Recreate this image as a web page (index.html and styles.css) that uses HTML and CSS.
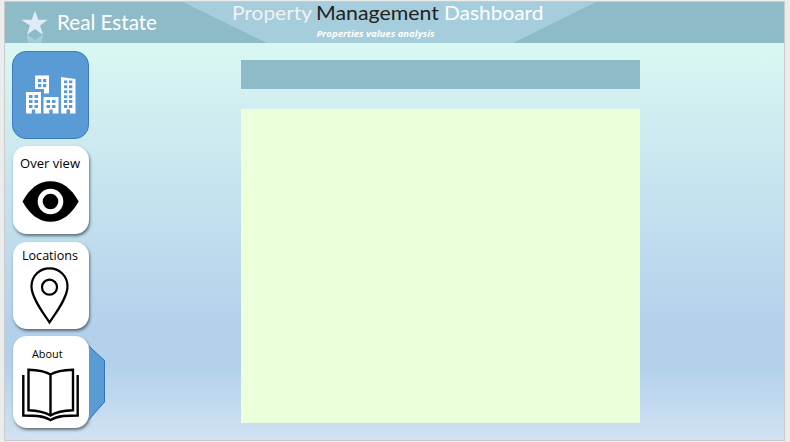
FILE: index.html
```
<!DOCTYPE html>
<html lang="en">
<head>
<meta charset="utf-8">
<title>Property Management Dashboard</title>
<link rel="stylesheet" href="styles.css">
</head>
<body>
<div class="slide">
  <header class="header">
    <svg class="header-art" width="779" height="41" viewBox="5 2 779 41">
      <defs>
        <linearGradient id="fade" x1="0" y1="0" x2="0" y2="1">
          <stop offset="0" stop-color="#dfebf7" stop-opacity=".5"/>
          <stop offset="1" stop-color="#dfebf7" stop-opacity=".25"/>
        </linearGradient>
      </defs>
      <path d="M183 2H596L513 43H267Z" fill="#a5cddb"/>
      <path d="M35 10.500L38.200 19.700H47.800L40.100 25.400L43 34.800L35 29.100L27 34.800L29.900 25.400L21.200 19.700H31.800Z" fill="#dfebf7"/>
      <path d="M27 35L35 40L43 35L41 43H28Z" fill="url(#fade)"/>
      <g class="title">
        <text class="brand" x="57" y="30" textLength="100" lengthAdjust="spacingAndGlyphs">Real Estate</text>
        <text class="soft" x="232" y="19.800" textLength="80" lengthAdjust="spacingAndGlyphs">Property</text>
        <text class="dark" x="316" y="19.800" textLength="123" lengthAdjust="spacingAndGlyphs">Management</text>
        <text x="444" y="19.800" textLength="99.500" lengthAdjust="spacingAndGlyphs">Dashboard</text>
      </g>
      <text class="subtitle" x="316.500" y="37" textLength="118" lengthAdjust="spacingAndGlyphs">Properties values analysis</text>
    </svg>
  </header>
  <div class="body">
    <nav class="nav">
      <div class="card home">
        <svg width="77" height="88" viewBox="12 51 77 88">
          <g fill="#fff">
            <path d="M35 75.500H49V93.500H44V89H35Z"/>
            <path d="M26 92H41V113.500H35.200V109.500H31.800V113.500H26Z"/>
            <path d="M43.500 97H58.500V113.500H52.700V109.500H49.300V113.500H43.500Z"/>
            <path d="M61 77L75.500 79V113.500H70V109.500H66.500V113.500H61Z"/>
          </g>
          <g fill="#5b9bd5">
            <path d="M38 79h3.300v3.300H38zM43 79h3.300v3.300H43zM38 84h3.300v3.300H38zM43 84h3.300v3.300H43z"/>
            <path d="M29 95h3.500v3H29zM34.500 95H38v3h-3.500zM29 100h3.500v3H29zM34.500 100H38v3h-3.500zM29 105h3.500v3H29zM34.500 105H38v3h-3.500z"/>
            <path d="M46.500 100H50v3h-3.500zM52 100h3.500v3H52zM46.500 105H50v3h-3.500zM52 105h3.500v3H52z"/>
            <path d="M64 80.500h3.300v2.800H64zM69 80.500h3.300v2.800H69zM64 85.300h3.300v3H64zM69 85.300h3.300v3H69zM64 90.300h3.300v3H64zM69 90.300h3.300v3H69zM64 95.200h3.300v3H64zM69 95.200h3.300v3H69zM64 100h3.300v3H64zM69 100h3.300v3H69zM64 105h3.300v3H64zM69 105h3.300v3H69z"/>
          </g>
        </svg>
      </div>
      <div class="card overview">
        <svg width="76" height="88" viewBox="13 146 76 88">
          <text x="20" y="168" textLength="60" lengthAdjust="spacingAndGlyphs">Over view</text>
          <path d="M22.500 201.500C30 188 39 181.300 50.500 181.300S71 188 78.700 201.500C71 215 62 221.700 50.500 221.700S30 215 22.500 201.500Z"/>
          <circle cx="50.500" cy="201.500" r="10.300" fill="none" stroke="#fff" stroke-width="5"/>
        </svg>
      </div>
      <div class="card locations">
        <svg width="76" height="87" viewBox="13 242 76 87">
          <text x="22" y="260" textLength="56" lengthAdjust="spacingAndGlyphs">Locations</text>
          <g fill="none" stroke="#000" stroke-width="2.200">
            <path d="M49.500 322.500C44 314 31.500 298 31.500 286.500C31.500 276 39.500 268.300 49.500 268.300S67.500 276 67.500 286.500C67.500 298 55 314 49.500 322.500Z"/>
            <circle cx="49.500" cy="287.200" r="7.500"/>
          </g>
        </svg>
      </div>
      <div class="about-row">
        <div class="card about">
          <svg width="76" height="91" viewBox="13 336 76 91">
            <text class="small" x="32" y="358" textLength="30.500" lengthAdjust="spacingAndGlyphs">About</text>
            <g fill="none" stroke="#000" stroke-width="2.400">
              <path d="M50.500 374.500C44 370.500 37 370 28.500 369.800V410.200C37 410.500 44 411.500 50.500 415.500C57 411.500 64 410.500 73 410.200V369.800C64 370 57 370.500 50.500 374.500ZM50.500 374.500V415"/>
              <path d="M23.300 375V415.500C33 415.500 43 415.500 50.500 420C58 415.500 68 415.500 77.700 415.500V375"/>
            </g>
          </svg>
        </div>
        <svg class="tab" width="17" height="85" viewBox="89 343 17 85">
          <path d="M81 339L104.500 360.500V402L82 427.500Z" fill="#5b9bd5" stroke="#2e75b6"/>
        </svg>
      </div>
    </nav>
    <main class="content">
      <div class="bar"></div>
      <div class="panel"></div>
    </main>
  </div>
</div>
</body>
</html>
```
FILE: styles.css
```
body {
  margin: 0;
  background: #ececec;
  overflow: hidden;
}

svg {
  display: block;
}

.slide {
  box-sizing: border-box;
  width: 781px;
  height: 440px;
  margin: 1px 0 0 4px;
  border: 1px solid #cbcbcb;
  background: linear-gradient(#dcfbf4 0%, #d9f7f2 10%, #b3d1eb 74%, #b3d1eb 83%, #d1e2f3 100%);
}

.header {
  height: 41px;
  background: #8ebbc8;
}

.header-art {
  overflow: visible;
}

.title {
  font: 20px Lato, "Open Sans", sans-serif;
  fill: #fff;
}

.title .brand {
  font-size: 21px;
}

.title .soft {
  fill: #f2f2f2;
}

.title .dark {
  fill: #222;
}

.subtitle {
  font: italic bold 9.5px "Open Sans", sans-serif;
  fill: #fff;
}

.body {
  display: flex;
}

.nav {
  width: 101px;
  padding: 8px 0 0 8px;
}

.card {
  width: 76px;
  border-radius: 14px;
  background: #fff;
  box-shadow: 1px 2px 3px rgba(0, 0, 0, .5);
}

.card text {
  font: 13px "Open Sans", sans-serif;
}

.card .small {
  font-size: 11px;
}

.home {
  box-sizing: border-box;
  width: 77px;
  height: 88px;
  margin-left: -1px;
  border: 1px solid #3a7cbd;
  background: #5b9bd5;
  box-shadow: none;
}

.home svg {
  margin: -1px;
}

.overview {
  margin-top: 7px;
}

.locations {
  margin-top: 8px;
}

.about-row {
  display: flex;
  margin-top: 7px;
}

.about {
  flex: none;
}

.tab {
  flex: none;
  margin-top: 7px;
}

.content {
  width: 399px;
  margin-left: 127px;
  padding-top: 17px;
}

.bar {
  height: 29px;
  background: #8ebbc8;
}

.panel {
  height: 314px;
  margin-top: 20px;
  background: #eaffda;
}
```
